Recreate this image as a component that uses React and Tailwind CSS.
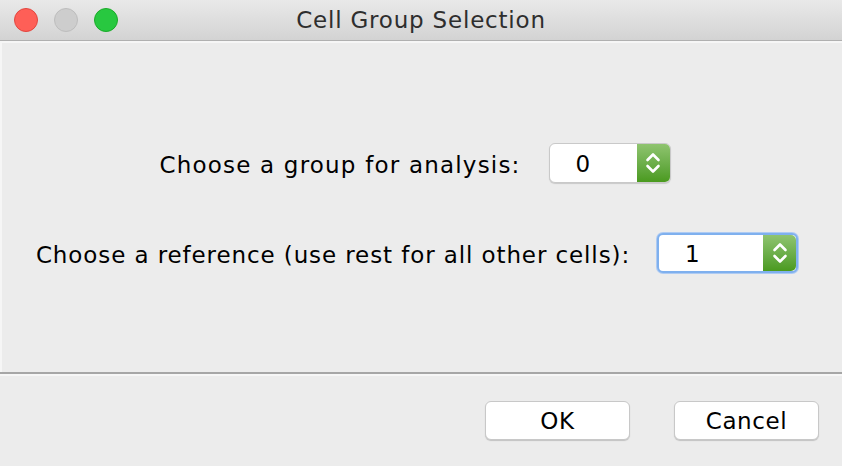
import React from "react";

function Spinner({ value, width, focused }) {
  return (
    <div
      className={`flex h-[40px] rounded-[6px] bg-white ${
        focused
          ? "border-2 border-[#7fb0ee] shadow-[0_0_0_1px_#aecbf3]"
          : "border border-[#c9c9c9] shadow-[0_1px_1px_rgba(0,0,0,0.15)]"
      }`}
      style={{ width }}
    >
      <div className="flex flex-1 items-center pl-[26px] pt-[2px] text-[23px] text-black">{value}</div>
      <div className="flex w-[33px] items-center justify-center rounded-r-[5px] bg-gradient-to-b from-[#8fc46f] to-[#4a9a1d]">
        <svg width="16" height="28" viewBox="0 0 16 28" fill="none" stroke="white" strokeWidth="2.6" strokeLinecap="round" strokeLinejoin="round">
          <path d="M2.5 11 L8 5.5 L13.5 11" />
          <path d="M2.5 17 L8 22.5 L13.5 17" />
        </svg>
      </div>
    </div>
  );
}

function Button({ children }) {
  return (
    <button className="flex h-[39px] w-[145px] items-center justify-center rounded-[6px] border border-[#c8c8c8] bg-white pt-[2px] text-[23px] tracking-[0.6px] text-black shadow-[0_1px_1px_rgba(0,0,0,0.18)]">
      {children}
    </button>
  );
}

export default function App() {
  return (
    <div
      className="flex h-[466px] w-[842px] flex-col bg-[#ececec]"
      style={{ fontFamily: '"DejaVu Sans", "Noto Sans", sans-serif' }}
    >
      <div className="relative flex h-[41px] items-center border-b border-[#b0b0b0] bg-gradient-to-b from-[#e9e9e9] to-[#d3d3d3]">
        <div className="flex gap-[16px] pl-[14px]">
          <div className="h-[24px] w-[24px] rounded-full border border-[#e2463f] bg-[#fe5f57]" />
          <div className="h-[24px] w-[24px] rounded-full border border-[#bdbdbd] bg-[#cdcdcd]" />
          <div className="h-[24px] w-[24px] rounded-full border border-[#1aab29] bg-[#28c840]" />
        </div>
        <div className="absolute inset-x-0 top-0 flex h-[40px] items-center justify-center text-[23px] tracking-[0.8px] text-[#2e2e2e]">
          Cell Group Selection
        </div>
      </div>
      <div className="flex h-[331px] flex-col border-l-2 border-t-2 border-[#f6f6f6] pt-[100px]">
        <div className="flex items-center justify-center gap-[28px] pr-[14px]">
          <span className="pt-[4px] text-[23px] tracking-[1.2px] text-black">Choose a group for analysis:</span>
          <Spinner value="0" width={122} />
        </div>
        <div className="mt-[50px] flex items-center justify-center gap-[27px] pr-[10px]">
          <span className="pt-[4px] text-[23px] tracking-[0.9px] text-black">Choose a reference (use rest for all other cells):</span>
          <Spinner value="1" width={141} focused />
        </div>
      </div>
      <div className="h-[2px] bg-[#a6a6a6]" />
      <div className="flex flex-1 justify-end gap-[44px] border-t-2 border-[#f6f6f6] pr-[23px] pt-[25px]">
        <Button>OK</Button>
        <Button>Cancel</Button>
      </div>
    </div>
  );
}
